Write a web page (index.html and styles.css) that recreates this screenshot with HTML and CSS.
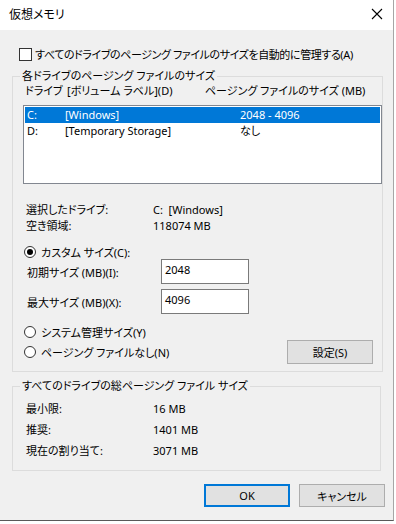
FILE: index.html
```html
<!DOCTYPE html>
<html lang="ja">
<head>
    <meta charset="UTF-8">
    <title>仮想メモリ</title>
    <link rel="stylesheet" href="styles.css">
</head>
<body>
    <div class="window">
        <div class="titlebar">
            <span class="title">仮想メモリ</span>
            <svg class="close" width="12" height="12" viewBox="0 0 12 12">
                <path d="M1 1 L11 11 M11 1 L1 11" stroke="#000" stroke-width="1.1" fill="none"/>
            </svg>
        </div>
        <div class="content">
            <div class="auto">
                <span class="check"></span>
                <span class="tight">すべてのドライブのページング ファイルのサイズを自動的に管理する(A)</span>
            </div>

            <fieldset class="group g1">
                <legend>各ドライブのページング ファイルのサイズ</legend>
                <div class="head">
                    <span class="c1">ドライブ</span>
                    <span class="c2">[ボリューム ラベル](D)</span>
                    <span class="c3">ページング ファイルのサイズ (MB)</span>
                </div>
                <div class="listbox">
                    <div class="item sel">
                        <span class="c1">C:</span>
                        <span class="c2">[Windows]</span>
                        <span class="c3">2048 - 4096</span>
                    </div>
                    <div class="item">
                        <span class="c1">D:</span>
                        <span class="c2">[Temporary Storage]</span>
                        <span class="c3">なし</span>
                    </div>
                </div>
                <div class="info first">
                    <span class="lbl">選択したドライブ:</span>
                    <span>C:&nbsp; [Windows]</span>
                </div>
                <div class="info">
                    <span class="lbl">空き領域:</span>
                    <span>118074 MB</span>
                </div>
                <div class="radio r-custom">
                    <span class="dot on"></span>
                    <span>カスタム サイズ(C):</span>
                </div>
                <div class="field">
                    <span class="flbl">初期サイズ (MB)(I):</span>
                    <div class="input">2048</div>
                </div>
                <div class="field f2">
                    <span class="flbl">最大サイズ (MB)(X):</span>
                    <div class="input">4096</div>
                </div>
                <div class="radio r-system">
                    <span class="dot"></span>
                    <span>システム管理サイズ(Y)</span>
                </div>
                <div class="radio r-none">
                    <span class="dot"></span>
                    <span>ページング ファイルなし(N)</span>
                    <button class="btn set">設定(S)</button>
                </div>
            </fieldset>

            <fieldset class="group g2">
                <legend>すべてのドライブの総ページング ファイル サイズ</legend>
                <div class="total">
                    <span class="lbl">最小限:</span>
                    <span>16 MB</span>
                </div>
                <div class="total">
                    <span class="lbl">推奨:</span>
                    <span>1401 MB</span>
                </div>
                <div class="total">
                    <span class="lbl">現在の割り当て:</span>
                    <span>3071 MB</span>
                </div>
            </fieldset>

            <div class="buttons">
                <button class="btn ok">OK</button>
                <button class="btn">キャンセル</button>
            </div>
        </div>
    </div>
</body>
</html>
```

FILE: styles.css
```css
@charset "UTF-8";
*{
    box-sizing: border-box;
    margin: 0px;
    padding: 0px;
}
body{
    background-color: #fff;
    font-family: "Noto Sans", "Noto Sans CJK JP", sans-serif;
    font-size: 11px;
    font-feature-settings: "palt";
    color: #000;
}
.window{
    width: 394px;
    height: 521px;
    border-right: 1px solid #a6a6a6;
    border-bottom: 1px solid #595959;
    display: flex;
    flex-direction: column;
}
.titlebar{
    height: 30px;
    background-color: #fff;
    display: flex;
    align-items: center;
    justify-content: space-between;
    padding: 0px 9px 2px 9px;
    font-size: 12px;
}
.close{
    margin-right: 1px;
}
.content{
    flex: 1;
    background-color: #f0f0f0;
    padding-top: 16px;
}
.auto{
    display: flex;
    align-items: center;
    height: 16px;
    margin-left: 19px;
    gap: 3px;
    white-space: nowrap;
}
.tight{
    letter-spacing: -0.4px;
}
.check{
    width: 13px;
    height: 13px;
    border: 1px solid #333;
    background-color: #fff;
}

/* group boxes */
.group{
    border: 1px solid #dcdcdc;
    margin-left: 12px;
    width: 369px;
}
.group legend{
    margin-left: 7px;
    padding: 0px 2px;
    line-height: 16px;
}
.g1{
    margin-top: 6px;
    padding-bottom: 7px;
}
.head, .item, .info, .total{
    display: flex;
    white-space: nowrap;
}
.head{
    line-height: 14px;
    padding-left: 12px;
}
.head .c1{
    width: 42px;
}
.head .c2{
    width: 138px;
}
.listbox{
    margin: 7px 0px 0px 10px;
    width: 359px;
    height: 79px;
    border: 1px solid #828790;
    background-color: #fff;
    padding: 1px;
}
.item{
    height: 16px;
    line-height: 16px;
    padding-left: 2px;
}
.item.sel{
    background-color: #0078d7;
    color: #fff;
}
.item .c1{
    width: 38px;
}
.item .c2{
    width: 175px;
}
.info{
    line-height: 16px;
    padding-left: 13px;
}
.info.first{
    margin-top: 18px;
}
.info .lbl, .total .lbl{
    width: 127px;
}
.radio{
    display: flex;
    align-items: center;
    gap: 5px;
    padding-left: 11px;
    white-space: nowrap;
}
.dot{
    width: 12px;
    height: 12px;
    border: 1px solid #333;
    border-radius: 50%;
    background-color: #fff;
    display: flex;
    align-items: center;
    justify-content: center;
}
.dot.on::after{
    content: "";
    width: 6px;
    height: 6px;
    border-radius: 50%;
    background-color: #000;
}
.r-custom{
    height: 14px;
    margin-top: 11px;
}
.field{
    display: flex;
    align-items: center;
    padding-left: 14px;
}
.f2{
    margin-top: 5px;
}
.flbl{
    width: 134px;
}
.input{
    width: 88px;
    height: 25px;
    border: 1px solid #7a7a7a;
    background-color: #fff;
    padding: 2px 0px 0px 3px;
    line-height: 16px;
}
.r-system{
    height: 14px;
    margin-top: 11px;
}
.r-none{
    height: 24px;
    margin-top: 1px;
}
.btn{
    font-family: inherit;
    font-size: 11px;
    font-feature-settings: "palt";
    color: #000;
    width: 86px;
    height: 23px;
    background-color: #e1e1e1;
    border: 1px solid #adadad;
}
.set{
    height: 24px;
    margin-left: auto;
    margin-right: 9px;
}
.g2{
    margin-top: 6px;
    padding: 4px 0px 9px 0px;
}
.total{
    line-height: 21px;
    padding-left: 13px;
}
.buttons{
    display: flex;
    justify-content: flex-end;
    gap: 9px;
    margin-top: 13px;
    padding-right: 8px;
}
.btn.ok{
    border: 2px solid #0078d7;
}
```
